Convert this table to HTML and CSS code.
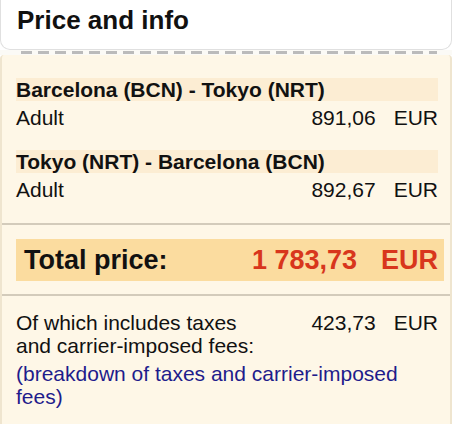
FILE: index.html
```html
<!DOCTYPE html>
<html lang="en">
<head>
<meta charset="utf-8">
<title>Price and info</title>
<link rel="stylesheet" href="styles.css">
</head>
<body>
<div class="card">
  <div class="head">
    <h1 class="title">Price and info</h1>
  </div>
  <div class="perf"><div class="dashes"></div></div>
  <div class="sheet">
    <div class="legs">
      <div class="leg">
        <div class="route">Barcelona (BCN) - Tokyo (NRT)</div>
        <div class="line"><span class="label">Adult</span><span class="amount">891,06</span><span class="cur">EUR</span></div>
      </div>
      <div class="leg">
        <div class="route">Tokyo (NRT) - Barcelona (BCN)</div>
        <div class="line"><span class="label">Adult</span><span class="amount">892,67</span><span class="cur">EUR</span></div>
      </div>
    </div>
    <div class="total-wrap">
      <div class="total">
        <span class="total-label">Total price:</span>
        <span class="total-amount">1 783,73</span>
        <span class="total-cur">EUR</span>
      </div>
    </div>
    <div class="taxes">
      <div class="line"><span class="label tax-label">Of which includes taxes and carrier-imposed fees:</span><span class="amount">423,73</span><span class="cur">EUR</span></div>
      <a class="breakdown" href="#">(breakdown of taxes and carrier-imposed fees)</a>
    </div>
  </div>
</div>
</body>
</html>
```

FILE: styles.css
```css
* { box-sizing: border-box; }

html, body {
  margin: 0;
  padding: 0;
  background: #ffffff;
}

body {
  font-family: "Liberation Sans", Arial, sans-serif;
  color: #111111;
  width: 452px;
  height: 424px;
  overflow: hidden;
}

.card {
  width: 452px;
}

.head {
  height: 50px;
  background: #ffffff;
  border: 1px solid #e0e0e0;
  border-top: none;
  border-radius: 0 0 10px 10px;
  padding: 5px 0 0 16px;
}

.title {
  margin: 0;
  font-size: 26px;
  line-height: 30px;
  font-weight: bold;
  color: #111111;
}

.perf {
  height: 5px;
  padding: 1px 15px 0 21px;
  background: #fbfaf6;
}

.dashes {
  height: 3px;
  background: repeating-linear-gradient(90deg, #bbbbbb 0 11px, transparent 11px 17px);
}

.sheet {
  background: #fef7e7;
  border-left: 2px solid #efe5cf;
  border-right: 2px solid #efe5cf;
  border-top-left-radius: 4px;
  border-top-right-radius: 4px;
  min-height: 369px;
}

.legs {
  padding: 23px 12px 22px 14px;
  border-bottom: 2px solid #d3cbbb;
}

.leg + .leg {
  margin-top: 21px;
}

.route {
  background: #fcedd3;
  font-weight: bold;
  font-size: 21px;
  line-height: 23px;
  white-space: nowrap;
}

.line {
  display: flex;
  align-items: flex-start;
  font-size: 21px;
  line-height: 23px;
}

.leg .line {
  margin-top: 5px;
}

.label {
  flex: 0 0 auto;
}

.amount {
  margin-left: auto;
}

.cur {
  margin-left: 18px;
}

.total-wrap {
  padding: 14px 6px 13px 14px;
  border-bottom: 2px solid #d3cbbb;
}

.total {
  display: flex;
  align-items: baseline;
  height: 42px;
  background: #fbdc9f;
  padding: 0 6px 0 8px;
  font-size: 27px;
  line-height: 42px;
  font-weight: bold;
}

.total-label {
  color: #111111;
}

.total-amount {
  margin-left: auto;
  color: #d8361c;
}

.total-cur {
  margin-left: 24px;
  color: #d8361c;
}

.taxes {
  padding: 15px 12px 0 14px;
}

.tax-label {
  width: 245px;
}

.breakdown {
  display: block;
  margin-top: 5px;
  font-size: 21px;
  line-height: 23px;
  color: #1e1c8c;
  text-decoration: none;
}
```
